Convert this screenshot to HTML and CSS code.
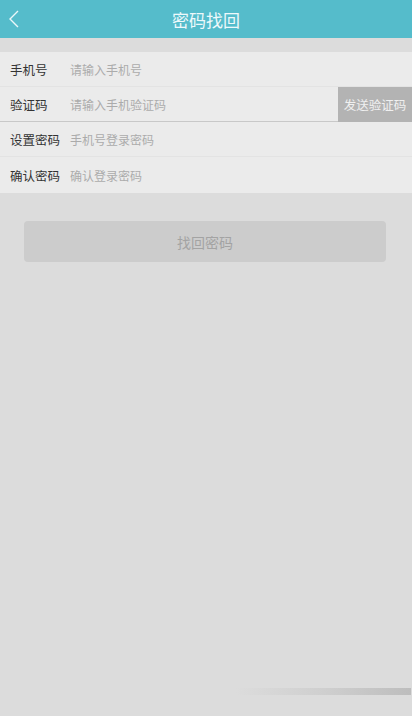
FILE: index.html
```html
<!DOCTYPE html>
<html lang="zh">
<head>
<meta charset="utf-8">
<link rel="stylesheet" href="styles.css">
</head>
<body>
<div class="page">
  <header class="topbar">
    <span class="back">
      <svg width="12" height="18" viewBox="0 0 12 18"><polyline points="10,1 2,9 10,17" fill="none" stroke="#eaf7f9" stroke-width="1.4"/></svg>
    </span>
    <h1 class="title">密码找回</h1>
  </header>
  <div class="form">
    <div class="row">
      <span class="label">手机号</span>
      <span class="ph">请输入手机号</span>
    </div>
    <div class="row row-code">
      <span class="label">验证码</span>
      <span class="ph">请输入手机验证码</span>
      <span class="send">发送验证码</span>
    </div>
    <div class="row">
      <span class="label">设置密码</span>
      <span class="ph">手机号登录密码</span>
    </div>
    <div class="row last">
      <span class="label">确认密码</span>
      <span class="ph">确认登录密码</span>
    </div>
  </div>
  <div class="actions">
    <div class="submit">找回密码</div>
  </div>
  <div class="scrollbar"></div>
</div>
</body>
</html>
```
FILE: styles.css
```css
html, body {
  margin: 0;
  padding: 0;
}
body {
  background: #dcdcdc;
  font-family: "Noto Sans CJK SC", "Noto Sans", sans-serif;
}
.page {
  position: relative;
  width: 412px;
  height: 716px;
  overflow: hidden;
  background: #dcdcdc;
}
.topbar {
  position: relative;
  height: 38px;
  background: #55bccb;
  display: flex;
  align-items: center;
  justify-content: center;
}
.back {
  position: absolute;
  left: 8px;
  top: 10px;
  display: flex;
}
.title {
  margin: 0;
  font-size: 17px;
  font-weight: normal;
  color: #eef9fb;
  line-height: 1;
}
.form {
  margin-top: 14px;
  background: #ebebeb;
}
.row {
  height: 35px;
  display: flex;
  align-items: center;
  border-bottom: 1px solid #e3e3e3;
  box-sizing: border-box;
}
.row.last {
  border-bottom: none;
  height: 36px;
}
.row-code {
  border-bottom: 1px solid #c8c8c8;
}
.label {
  width: 60px;
  padding-left: 10px;
  font-size: 12.5px;
  color: #333;
  flex-shrink: 0;
}
.ph {
  flex: 1;
  font-size: 12px;
  color: #ababab;
}
.send {
  align-self: stretch;
  width: 74px;
  margin-bottom: -1px;
  background: #b3b3b3;
  color: #f0f0f0;
  font-size: 12.5px;
  display: flex;
  align-items: center;
  justify-content: center;
}
.actions {
  padding: 28px 26px 0 24px;
}
.submit {
  height: 41px;
  border-radius: 4px;
  background: #cccccc;
  color: #a3a3a3;
  font-size: 14px;
  display: flex;
  align-items: center;
  justify-content: center;
}
.scrollbar {
  position: absolute;
  right: 1px;
  top: 688px;
  width: 175px;
  height: 7px;
  background: linear-gradient(to right, rgba(200,200,200,0), #cfcfcf 50%, #bdbdbd);
}
```
